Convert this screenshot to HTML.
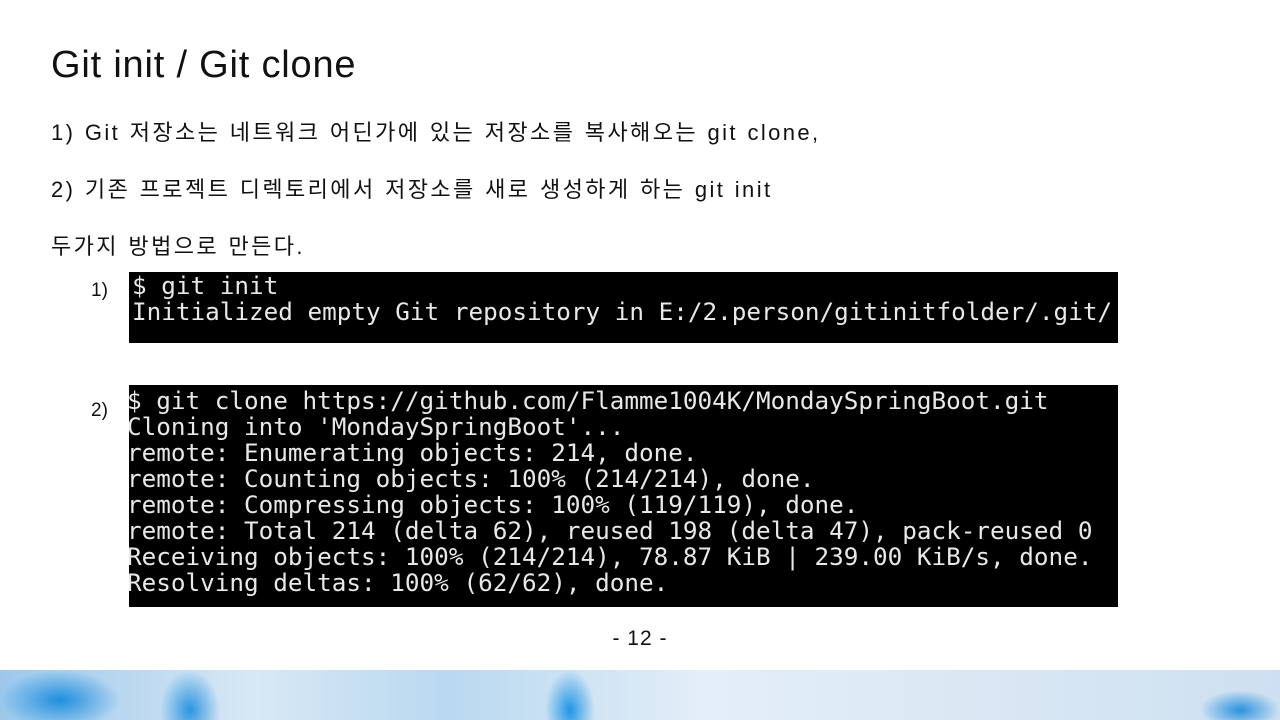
<!DOCTYPE html>
<html><head><meta charset="utf-8"><style>
body{margin:0;width:1280px;height:720px;background:#fff;position:relative;overflow:hidden;font-family:"Liberation Sans","Noto Sans CJK KR",sans-serif;color:#111}
.a{position:absolute;white-space:nowrap}
.t{font-size:38px;left:51px;top:44px;letter-spacing:0.8px}
.b{font-size:22px;left:51px;letter-spacing:2.4px;word-spacing:1px}
.term{position:absolute;left:129px;width:989px;background:#000;color:#e8e8e8;font-family:"DejaVu Sans Mono",monospace;font-size:24.3px;line-height:26px;white-space:pre;overflow:hidden}
.sky{position:absolute;left:0;top:670px;width:1280px;height:50px;background:
radial-gradient(ellipse 60px 30px at 60px 30px,#1e8fe0,transparent),
radial-gradient(ellipse 30px 40px at 190px 40px,#2b95e0,transparent),
radial-gradient(ellipse 25px 40px at 570px 40px,#2196e6,transparent),
radial-gradient(ellipse 40px 20px at 1240px 40px,#2a93dc,transparent),
linear-gradient(90deg,#9cc8ec 0%,#d8e8f5 20%,#b9d8f0 35%,#e3eef8 55%,#dbe8f4 75%,#cde0f1 100%)}
</style></head><body>
<div class="a t">Git init / Git clone</div>
<div class="a b" style="top:115px">1) Git 저장소는 네트워크 어딘가에 있는 저장소를 복사해오는 git clone,</div>
<div class="a b" style="top:172px">2) 기존 프로젝트 디렉토리에서 저장소를 새로 생성하게 하는 git init</div>
<div class="a b" style="top:229px">두가지 방법으로 만든다.</div>
<div class="a" style="left:91px;top:280px;font-size:19px">1)</div>
<div class="a" style="left:91px;top:400px;font-size:19px">2)</div>
<div class="term" style="top:272px;height:71px;padding-left:3px;width:986px"><div style="padding-top:1px">$ git init
Initialized empty Git repository in E:/2.person/gitinitfolder/.git/</div></div>
<div class="term" style="top:385px;height:222px"><div style="margin-left:-2px;padding-top:3px">$ git clone https://github.com/Flamme1004K/MondaySpringBoot.git
Cloning into 'MondaySpringBoot'...
remote: Enumerating objects: 214, done.
remote: Counting objects: 100% (214/214), done.
remote: Compressing objects: 100% (119/119), done.
remote: Total 214 (delta 62), reused 198 (delta 47), pack-reused 0
Receiving objects: 100% (214/214), 78.87 KiB | 239.00 KiB/s, done.
Resolving deltas: 100% (62/62), done.</div></div>
<div class="a" style="left:0;width:1280px;text-align:center;top:627px;font-size:21px;letter-spacing:1px">- 12 -</div>
<div class="sky"></div>
</body></html>
